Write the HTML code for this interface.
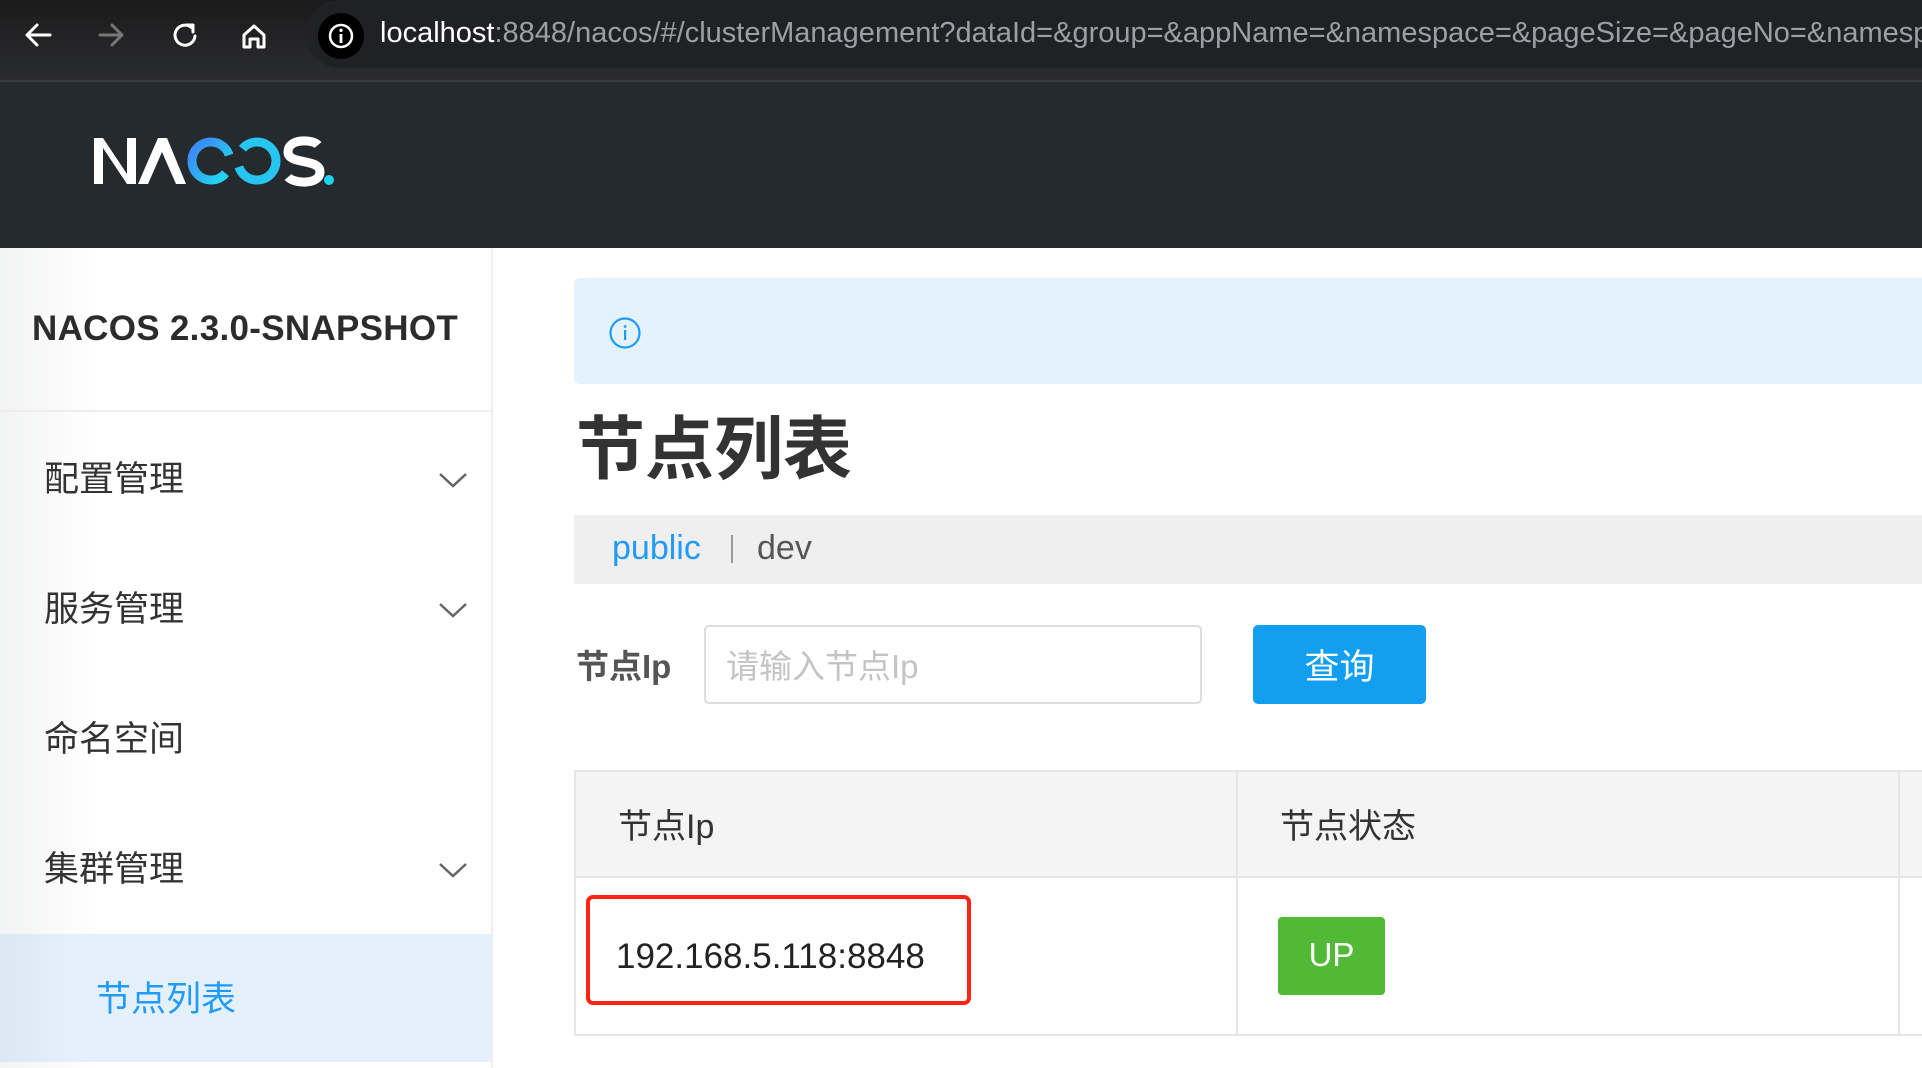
<!DOCTYPE html>
<html><head><meta charset="utf-8"><style>
*{margin:0;padding:0;box-sizing:border-box}
html,body{width:1922px;height:1068px;overflow:hidden}
body{background:#fff;font-family:"Liberation Sans","Noto Sans CJK SC",sans-serif;position:relative}
.abs{position:absolute}
.cn{font-family:"Liberation Sans","Noto Sans CJK SC",sans-serif}
</style></head><body>
<!-- browser bar -->
<div class="abs" style="left:0;top:0;width:1922px;height:81px;background:linear-gradient(#1b1b1c,#2b2c2e)"></div>
<div class="abs" style="left:0;top:80px;width:1922px;height:2px;background:#3a3b3d"></div>
<svg class="abs" style="left:20px;top:18px" width="300" height="36" viewBox="0 0 300 36">
 <g fill="none" stroke="#fff" stroke-width="3" stroke-linecap="round" stroke-linejoin="round">
  <path d="M30 17H8M17 7L7 17l10 10"/>
  <path d="M80 17h22M92 7l10 10-10 10" stroke="#777"/>
  <path d="M172 10a10 10 0 1 0 3 8M166 7h7v7"/>
  <path d="M224 29V17l10-9 10 9v12h-6v-8h-8v8z"/>
 </g>
</svg>
<div class="abs" style="left:306px;top:0;width:1616px;height:68px;background:#202124;border-radius:34px 0 0 34px;overflow:hidden">
 <div class="abs" style="left:74px;top:15px;font-size:29px;color:#fff;white-space:nowrap;line-height:36px">localhost<span style="color:#9aa0a6">:8848/nacos/#/clusterManagement?dataId=&amp;group=&amp;appName=&amp;namespace=&amp;pageSize=&amp;pageNo=&amp;namespaceShowName=</span></div>
</div>
<div class="abs" style="left:318px;top:13px;width:46px;height:46px;border-radius:50%;background:#000"></div>
<svg class="abs" style="left:326px;top:21px" width="30" height="30" viewBox="0 0 30 30"><circle cx="15" cy="15" r="11" fill="none" stroke="#fff" stroke-width="2.5"/><rect x="13.6" y="13" width="2.8" height="9" fill="#fff"/><circle cx="15" cy="9.3" r="1.7" fill="#fff"/></svg>
<!-- header -->
<div class="abs" style="left:0;top:82px;width:1922px;height:166px;background:#252a2f"></div>
<svg class="abs" style="left:90px;top:130px" width="260" height="64" viewBox="0 0 260 64">
 <defs><linearGradient id="g" x1="0" x2="1"><stop offset="0" stop-color="#3a8ef6"/><stop offset="1" stop-color="#22d3f0"/></linearGradient></defs>
 <path d="M4 54V8h9l24 36V8h9v46h-9L13 18v36z" fill="#fff"/>
 <path d="M48 54L68 8h9l19 46H86L72 22 58 54z" fill="#fff"/>
 <circle cx="121" cy="31" r="19" fill="none" stroke="url(#g)" stroke-width="9" stroke-dasharray="100 20" transform="rotate(40 121 31)"/>
 <circle cx="167" cy="31" r="19" fill="none" stroke="#27c6f0" stroke-width="9" stroke-dasharray="100 20" transform="rotate(220 167 31)"/>
 <path d="M228 15c-5-6-30-7-30 7 0 13 32 6 32 20 0 13-26 12-32 5" fill="none" stroke="#fff" stroke-width="9"/>
 <circle cx="239" cy="50" r="5" fill="#22d3f0"/>
</svg>
<!-- sidebar -->
<div class="abs" style="left:0;top:248px;width:493px;height:820px;background:linear-gradient(90deg,#f2f3f4,#fff 20%);border-right:2px solid #eee"></div>
<div class="abs" style="left:32px;top:309px;font-size:35px;font-weight:bold;color:#2c2c2c;letter-spacing:0.3px">NACOS 2.3.0-SNAPSHOT</div>
<div class="abs" style="left:0;top:410px;width:491px;height:2px;background:#eee"></div>
<div class="abs cn" style="left:44px;top:451px;font-size:35px;color:#333">配置管理</div>
<div class="abs cn" style="left:44px;top:581px;font-size:35px;color:#333">服务管理</div>
<div class="abs cn" style="left:44px;top:711px;font-size:35px;color:#333">命名空间</div>
<div class="abs cn" style="left:44px;top:841px;font-size:35px;color:#333">集群管理</div>
<svg class="abs" style="left:438px;top:470px" width="30" height="20"><path d="M2 4l13 12 13-12" fill="none" stroke="#666" stroke-width="2.5"/></svg>
<svg class="abs" style="left:438px;top:600px" width="30" height="20"><path d="M2 4l13 12 13-12" fill="none" stroke="#666" stroke-width="2.5"/></svg>
<svg class="abs" style="left:438px;top:860px" width="30" height="20"><path d="M2 4l13 12 13-12" fill="none" stroke="#666" stroke-width="2.5"/></svg>
<div class="abs" style="left:0;top:934px;width:491px;height:128px;background:linear-gradient(90deg,#dbe7f2,#e4f1fc 15%)"></div>
<div class="abs cn" style="left:96px;top:971px;font-size:35px;color:#209bfa">节点列表</div>
<!-- main -->
<div class="abs" style="left:574px;top:278px;width:1348px;height:106px;background:#e3f2fd;border-radius:6px 0 0 6px"></div>
<svg class="abs" style="left:608px;top:316px" width="34" height="34"><circle cx="17" cy="17" r="14.5" fill="none" stroke="#209bfa" stroke-width="2.2"/><rect x="16" y="14" width="2.2" height="10" fill="#209bfa"/><circle cx="17.1" cy="10.5" r="1.4" fill="#209bfa"/></svg>
<div class="abs cn" style="left:576px;top:408px;font-size:69px;font-weight:bold;color:#333;line-height:84px">节点列表</div>
<div class="abs" style="left:574px;top:515px;width:1348px;height:69px;background:#efefef"></div>
<div class="abs" style="left:612px;top:529px;font-size:34px;color:#209bfa">public</div>
<div class="abs" style="left:731px;top:535px;width:2px;height:28px;background:#999"></div>
<div class="abs" style="left:757px;top:529px;font-size:34px;color:#555">dev</div>
<div class="abs cn" style="left:576px;top:640px;font-size:33px;font-weight:bold;color:#555">节点Ip</div>
<div class="abs" style="left:704px;top:625px;width:498px;height:79px;border:2px solid #ddd;border-radius:5px"></div>
<div class="abs cn" style="left:726px;top:640px;font-size:33px;color:#c4c4c4">请输入节点Ip</div>
<div class="abs" style="left:1253px;top:625px;width:173px;height:79px;background:#139ff0;border-radius:5px"></div>
<div class="abs cn" style="left:1253px;top:639px;width:173px;text-align:center;font-size:35px;color:#fff">查询</div>
<!-- table -->
<div class="abs" style="left:574px;top:770px;width:1348px;height:108px;background:#f4f4f4;border-top:2px solid #e6e6e6;border-bottom:2px solid #e6e6e6;border-left:2px solid #e6e6e6"></div>
<div class="abs" style="left:574px;top:878px;width:1348px;height:158px;border-bottom:2px solid #e6e6e6;border-left:2px solid #e6e6e6"></div>
<div class="abs" style="left:1236px;top:770px;width:2px;height:266px;background:#e6e6e6"></div>
<div class="abs" style="left:1898px;top:770px;width:2px;height:266px;background:#e6e6e6"></div>
<div class="abs cn" style="left:618px;top:799px;font-size:34px;color:#333">节点Ip</div>
<div class="abs cn" style="left:1280px;top:799px;font-size:34px;color:#333">节点状态</div>
<div class="abs" style="left:586px;top:895px;width:385px;height:110px;border:4px solid #ff2414;border-radius:7px"></div>
<div class="abs" style="left:616px;top:937px;font-size:35px;color:#222">192.168.5.118:8848</div>
<div class="abs" style="left:1278px;top:917px;width:107px;height:78px;background:#51b935;border-radius:4px"></div>
<div class="abs" style="left:1278px;top:936px;width:107px;text-align:center;font-size:33px;color:#fff">UP</div>
</body></html>
